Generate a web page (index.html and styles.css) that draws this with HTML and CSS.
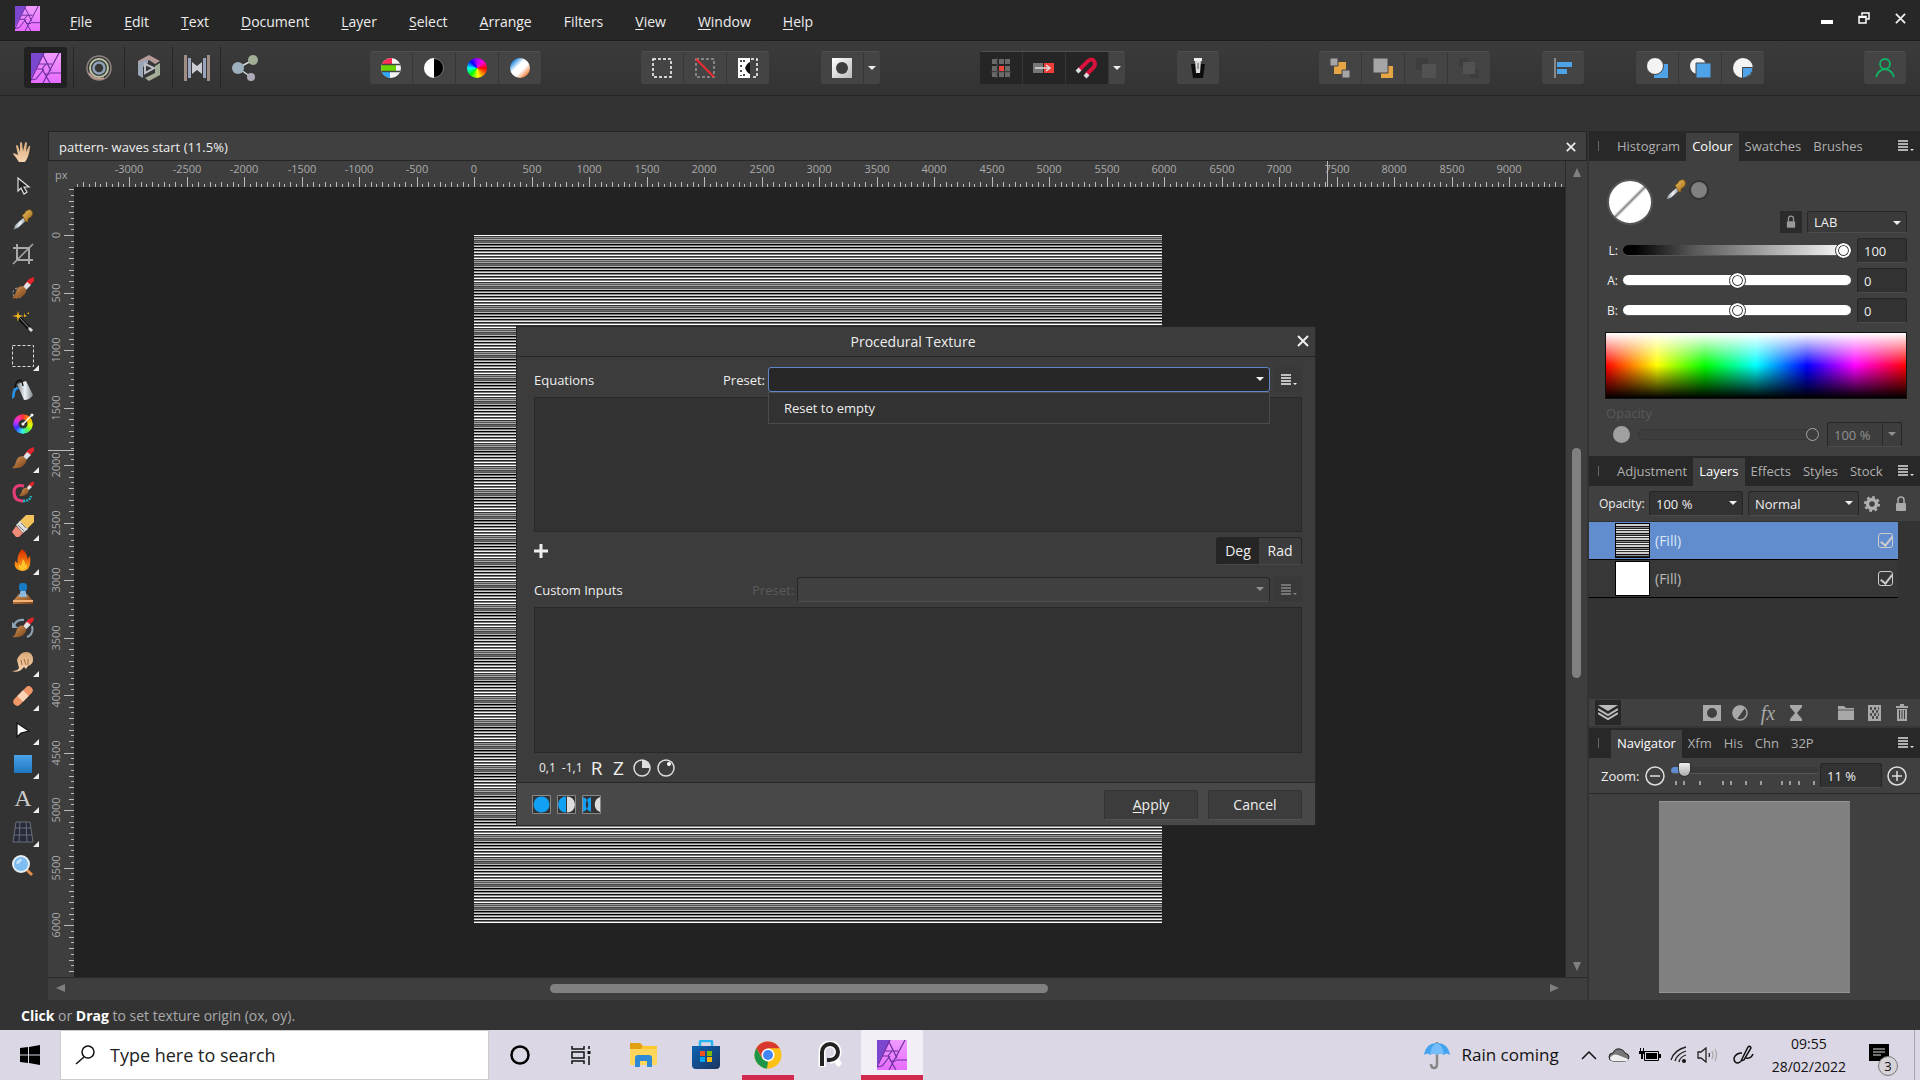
FILE: index.html
```html
<!DOCTYPE html>
<html lang="en">
<head>
  <meta charset="UTF-8">
  <title>pattern- waves start (11.5%)</title>
  <meta name="viewport" content="width=device-width, initial-scale=1.0">
  <link rel="stylesheet" href="styles.css">
</head>
<body>

  <!-- shared symbols -->
  <svg class="defs" width="0" height="0" aria-hidden="true">
    <defs>
      <linearGradient id="pink" x1="0" y1="0" x2="0" y2="1"><stop offset="0" stop-color="#f09bff"/><stop offset="1" stop-color="#e76cff"/></linearGradient>
      <linearGradient id="wood" x1="0" y1="0" x2="1" y2="1"><stop offset="0" stop-color="#d9985a"/><stop offset="1" stop-color="#7a4316"/></linearGradient>
      <linearGradient id="gold" x1="0" y1="0" x2="1" y2="1"><stop offset="0" stop-color="#f2c565"/><stop offset="1" stop-color="#9a6413"/></linearGradient>
      <linearGradient id="steel" x1="0" y1="0" x2="1" y2="0"><stop offset="0" stop-color="#7f8c96"/><stop offset=".5" stop-color="#eef3f6"/><stop offset="1" stop-color="#7b868e"/></linearGradient>
      <linearGradient id="skin" x1="0" y1="0" x2="0" y2="1"><stop offset="0" stop-color="#d9a978"/><stop offset="1" stop-color="#f7d3b0"/></linearGradient>
      <linearGradient id="flame" x1="0" y1="0" x2="0" y2="1"><stop offset="0" stop-color="#d92800"/><stop offset="1" stop-color="#ffb01c"/></linearGradient>
      <linearGradient id="blue" x1="0" y1="0" x2="0" y2="1"><stop offset="0" stop-color="#4aa3e8"/><stop offset="1" stop-color="#1f76c0"/></linearGradient>
      <linearGradient id="paper" x1="0" y1="0" x2="1" y2="1"><stop offset="0" stop-color="#fff"/><stop offset="1" stop-color="#bbb"/></linearGradient>
      <linearGradient id="bag" x1="0" y1="0" x2="1" y2="1"><stop offset="0" stop-color="#0b63b4"/><stop offset="1" stop-color="#1c355f"/></linearGradient>
      <symbol id="logo" viewBox="0 0 30 30">
        <rect width="30" height="30" fill="url(#pink)"/>
        <path d="M0 0h13L0 25z" fill="#7b47cf"/>
        <g stroke="#6b2f9e" stroke-width="1.2" fill="none">
          <path d="M13 0 0 27M12 2l8 16M28 0 12 30M8 11h13M5 16l6 0 8 14M11 16l4-5M11 16l3 5h5M19 20h11M0 27l5-1 8-10"/>
        </g>
      </symbol>
      <symbol id="picker" viewBox="0 0 22 22">
        <path d="M1 21 3 16 12 8l3 3-9 8z" fill="url(#steel)" stroke="#333" stroke-width=".6"/>
        <path d="m10 6 2-1 2-3q4-3 6 0t-1 6l-3 2v3l-2 0z" fill="url(#gold)" stroke="#5f3d08" stroke-width=".6"/>
      </symbol>
      <symbol id="brush" viewBox="0 0 22 22">
        <path d="M22 0 17 2l-5 6 3 3 7-7z" fill="#e3242b"/>
        <path d="m15 5-4 5 3 3 5-5z" fill="#dfe3e6"/>
        <path d="M11 9q-6 0-7 6-1 4-4 6 8 1 12-3 3-3 2-6z" fill="url(#wood)"/>
      </symbol>
      <symbol id="menu" viewBox="0 0 16 12">
        <path d="M0 1h10M0 4h10M0 7h10M0 10h10" stroke="currentColor" stroke-width="1.6"/>
        <path d="M12 9h4l-2 2z" fill="currentColor"/>
      </symbol>
      <symbol id="lock" viewBox="0 0 12 16">
        <path d="M3 7V4q0-3 3-3t3 3v3" fill="none" stroke="currentColor" stroke-width="1.5"/>
        <rect x="1" y="7" width="10" height="8" rx="1" fill="currentColor"/>
      </symbol>
      <symbol id="cross" viewBox="0 0 12 12">
        <path d="m1 1 10 10M11 1 1 11" stroke="currentColor" stroke-width="2" fill="none"/>
      </symbol>
    </defs>
  </svg>

  <div class="app">
    <header class="menubar">
      <svg class="menubar-logo"><use href="#logo"/></svg>
      <nav class="menus">
        <button><u>F</u>ile</button>
        <button><u>E</u>dit</button>
        <button><u>T</u>ext</button>
        <button><u>D</u>ocument</button>
        <button><u>L</u>ayer</button>
        <button><u>S</u>elect</button>
        <button><u>A</u>rrange</button>
        <button>Filters</button>
        <button><u>V</u>iew</button>
        <button><u>W</u>indow</button>
        <button><u>H</u>elp</button>
      </nav>
      <div class="window-buttons">
        <button aria-label="Minimise"><svg width="12" height="12"><path d="M0 8h12v4H0z" fill="#fff"/></svg></button>
        <button aria-label="Restore"><svg width="12" height="12" fill="none" stroke="#fff"><path d="M4 3.500V1h7v6H8.500" stroke-width="1.500"/><path d="M1 4.500h7V11H1z" stroke-width="1.500"/><path d="M1 5h7" stroke-width="2"/></svg></button>
        <button aria-label="Close"><svg width="11" height="11"><use href="#cross"/></svg></button>
      </div>
    </header>

    <div class="toolbar">
      <div class="personas">
        <button class="persona active" aria-label="Photo"><svg width="30" height="30"><use href="#logo"/></svg></button>
        <button class="persona" aria-label="Liquify">
          <svg width="26" height="26" fill="none"><circle cx="13" cy="13" r="12" stroke="#8f8480" stroke-width="1.500"/><circle cx="13" cy="13" r="9" stroke="#b9c4a4" stroke-width="2"/><circle cx="13" cy="13" r="5.500" stroke="#8fa3b8" stroke-width="2.500"/><path d="M3 18q5 8 15 5" stroke="#c39b8f" stroke-width="1.500"/></svg>
        </button>
        <button class="persona" aria-label="Develop">
          <svg width="24" height="26"><path d="M12 0 1 6v5l11-6 6 4 5-3z" fill="#b59a98"/><path d="M1 8v12l5 3V12l5-4V4z" fill="#9aa7b8"/><path d="m23 8-5 3v7l-10 5 4 3 11-6z" fill="#a3ad97"/><path d="m8 9 9 4-9 5z" fill="none" stroke="#b9bfc4" stroke-width="2"/></svg>
        </button>
        <button class="persona" aria-label="Tone Mapping">
          <svg width="26" height="26"><path d="M0 0h3v26H0zM23 0h3v26h-3z" fill="#a08d86"/><path d="M4 3h3v20H4zM19 3h3v20h-3z" fill="#9aa4bd"/><path d="m8 7 5 4 5-4v12l-5-4-5 4z" fill="#c9ccd2"/></svg>
        </button>
        <button class="persona" aria-label="Export">
          <svg width="26" height="26"><path d="M6 13 21 5M6 13l13 9" stroke="#d5d9dc" stroke-width="1.500"/><circle cx="6" cy="13" r="6" fill="#9db0bd"/><circle cx="21" cy="5" r="5" fill="#a2ae96"/><circle cx="19" cy="22" r="4" fill="#b0a8b8"/></svg>
        </button>
      </div>

      <div class="group">
        <button aria-label="Auto levels"><svg width="20" height="20"><clipPath id="c1"><circle cx="10" cy="10" r="10"/></clipPath><g clip-path="url(#c1)"><path d="M0 0h20v20H0z" fill="#f3f3f3"/><path d="M0 0h11v6H0z" fill="#ff2d55"/><path d="M0 7h15v6H0z" fill="#6ad400"/><path d="M0 14h9v6H0z" fill="#2fa8ff"/><path d="M0 6.500h20M0 13.500h20" stroke="#444" stroke-width="1.500"/></g></svg></button>
        <button aria-label="Auto contrast"><svg width="20" height="20"><circle cx="10" cy="10" r="9.500" fill="#000" stroke="#777"/><path d="M10 0a10 10 0 0 0 0 20z" fill="#fff"/></svg></button>
        <button aria-label="Auto colours"><span class="wheel"></span></button>
        <button aria-label="Auto white balance"><span class="balance"></span></button>
      </div>

      <div class="group">
        <button aria-label="Select all"><svg width="20" height="20"><rect x="1" y="1" width="18" height="18" fill="none" stroke="#fff" stroke-width="1.500" stroke-dasharray="3 2"/></svg></button>
        <button aria-label="Deselect"><svg width="20" height="20"><rect x="1" y="1" width="18" height="18" fill="none" stroke="#999" stroke-width="1.500" stroke-dasharray="3 2"/><path d="m1 1 18 18" stroke="#f22b30" stroke-width="2"/></svg></button>
        <button aria-label="Invert selection"><svg width="20" height="20"><path d="M0 0h12v20H0z" fill="#fff"/><path d="M13 1h6v18h-6" fill="none" stroke="#fff" stroke-width="1.500" stroke-dasharray="3 2"/><path d="M12 4v12q-3-1-5-6 2-5 5-6" fill="#111"/><path d="M3 2v16M5 3h5M5 17h4" stroke="#111" stroke-width="1.500" stroke-dasharray="2 3"/></svg></button>
      </div>

      <div class="group near">
        <button aria-label="Quick mask"><svg width="20" height="20"><path d="M0 0h20v20H0z" fill="url(#paper)"/><circle cx="10" cy="10" r="6" fill="#3d3d3d"/></svg></button>
        <button class="drop" aria-label="Quick mask options"><i class="caret"></i></button>
      </div>

      <div class="group">
        <button class="on" aria-label="Grid snapping"><svg width="20" height="20"><path d="M1 1h5v5H1zM8 1h5v5H8zM14 1h5v5h-5zM1 8h5v5H1zM14 8h5v5h-5zM1 14h5v5H1zM8 14h5v5H8zM14 14h5v5h-5z" fill="#6a6a6a"/><path d="M8 8h5v5H8z" fill="#f5443c"/><path d="M6 0v20M0 14h20" stroke="#555" stroke-width="1"/></svg></button>
        <button class="on" aria-label="Force pixel alignment"><svg width="22" height="12"><path d="M0 1h10v10H0z" fill="#777"/><path d="M11 1h10v10H11z" fill="#ef3e3a"/><path d="M2 6h14M13 3l4 3-4 3" fill="none" stroke="#ddd" stroke-width="1.500"/></svg></button>
        <button class="on" aria-label="Snapping"><svg width="24" height="24" fill="none"><path d="M4 14 13 5q4-3 6 0t0 6l-8 8" stroke="#d9123c" stroke-width="4"/><path d="m2 16 3-3M10 21l3-3" stroke="#ddd" stroke-width="4"/></svg></button>
        <button class="drop" aria-label="Snapping options"><i class="caret"></i></button>
      </div>

      <div class="group near">
        <button aria-label="Assistant"><svg width="18" height="20"><path d="M2 6h14l-2 14H4z" fill="#0c0c0c"/><path d="M6 2h6l-1 13H7z" fill="#ddd"/><path d="M5 0h8v3H5z" fill="#eee"/><path d="M8 5h2v6H8z" fill="#999"/></svg></button>
      </div>

      <div class="group">
        <button aria-label="Move to back"><svg width="20" height="20"><path d="M5 4h11v8H5z" fill="#e5a544"/><path d="M4 8h8v8H4z" fill="#e5a544"/><path d="M0 0h8v8H0zM12 12h8v8h-8z" fill="#a5a5a5" stroke="#444"/></svg></button>
        <button aria-label="Back one"><svg width="20" height="20"><path d="M8 8h12v12H8z" fill="#e5a544"/><path d="M0 0h15v15H0z" fill="#a5a5a5" stroke="#444"/></svg></button>
        <button disabled aria-label="Forward one"><svg width="20" height="20"><path d="M0 0h12v12H0z" fill="#3d3d3d"/><path d="M6 6h14v14H6z" fill="#525252"/></svg></button>
        <button disabled aria-label="Move to front"><svg width="20" height="20"><path d="M0 0h9v9H0zM11 11h9v9h-9z" fill="#3d3d3d"/><path d="M4 4h12v12H4z" fill="#525252"/></svg></button>
      </div>

      <div class="group near">
        <button aria-label="Alignment"><svg width="18" height="20"><path d="M1 0v20" stroke="#888" stroke-width="2"/><path d="M3 4h15v5H3zM3 11h10v5H3z" fill="#4da2e8"/></svg></button>
      </div>

      <div class="group near">
        <button aria-label="Add"><svg width="21" height="20"><path d="M7 6h14v14H7z" fill="#4da2e8"/><circle cx="8" cy="8" r="8.500" fill="#f3f3f3" stroke="#444"/></svg></button>
        <button aria-label="Subtract"><svg width="21" height="20"><circle cx="8" cy="8" r="8" fill="#f3f3f3"/><path d="M6 5h15v15H6z" fill="#4da2e8" stroke="#444"/></svg></button>
        <button aria-label="Intersect"><svg width="20" height="20"><circle cx="10" cy="10" r="10" fill="#f3f3f3"/><path d="M9.500 9.500H20q0 8-10.500 11z" fill="#4da2e8" stroke="#444"/></svg></button>
      </div>

      <button class="group account" aria-label="Account"><svg width="20" height="20" fill="none" stroke="#12b264" stroke-width="1.800"><circle cx="10" cy="6" r="5"/><path d="M1 19q2-7 9-8 7 1 9 8"/></svg></button>
    </div>

    <div class="contextbar"></div>

    <div class="workspace">
      <aside class="tools">
        <button class="tool" aria-label="View"><svg viewBox="0 0 22 22"><path d="M7 21Q3 15 1 13q0-2 5 1L4 5q1-2 2 0l2 6V2q1-2 2 0l1 8 2-8q1-2 2 0l-1 9 3-6q2-1 1 1-1 10-5 15z" fill="url(#skin)"/></svg></button>
        <button class="tool" aria-label="Move"><svg viewBox="0 0 22 22"><path d="M6 3v13l3-3 3 6 3-2-3-5h5z" fill="#222" stroke="#ddd" stroke-width="1.200"/></svg></button>
        <button class="tool" aria-label="Colour Picker"><svg><use href="#picker"/></svg></button>
        <button class="tool" aria-label="Crop"><svg viewBox="0 0 22 22" fill="none" stroke="#a8a8a8" stroke-width="2"><path d="M5 1v16h16M1 5h16v16"/><path d="M1 21 21 1" stroke-width="1.500"/></svg></button>
        <button class="tool" aria-label="Selection Brush"><svg viewBox="0 0 22 22"><circle cx="6" cy="16" r="5" fill="none" stroke="#bbb" stroke-dasharray="2 2"/><use href="#brush"/></svg></button>
        <button class="tool" aria-label="Flood Select"><svg viewBox="0 0 22 22"><path d="m7 7 12 12" stroke="#111" stroke-width="4"/><path d="m7 6 12 13" stroke="#999" stroke-width="1"/><path d="m17 17 3 3" stroke="#ddd" stroke-width="3"/><path d="m6 0 1 4 5 1-5 1-1 5-1-5-5-1 5-1zM12 2l1 2 2 1-3 1zM17 1v2h-2z" fill="#f5b71c"/></svg></button>
        <button class="tool fly" aria-label="Marquee"><svg viewBox="0 0 22 22"><rect x=".5" y=".5" width="21" height="21" fill="none" stroke="#ddd" stroke-dasharray="3 2"/></svg></button>
        <button class="tool" aria-label="Flood Fill"><svg viewBox="0 0 22 22"><path d="M0 20Q0 9 4 8l5 1q-6 1-6 6 0 4-3 5" fill="#2893e6"/><path d="m5 5 9-3 7 14q-3 5-9 5z" fill="url(#steel)"/><path d="M3 9q0-7 5-8 2 0 3 6" fill="none" stroke="#111" stroke-width="1.300"/></svg></button>
        <button class="tool" aria-label="Gradient"><span class="wheel ring"></span><svg class="over" viewBox="0 0 22 22"><path d="M11 11 20 2" stroke="#fff" stroke-width="1.500"/><circle cx="11" cy="11" r="1.500" fill="#fff"/><circle cx="20" cy="2" r="1.500" fill="#fff"/></svg></button>
        <button class="tool fly" aria-label="Paint Brush"><svg><use href="#brush"/></svg></button>
        <button class="tool" aria-label="Colour Replacement"><svg viewBox="0 0 22 22" fill="none"><path d="M12 5q-10-2-10 6 0 9 9 9" stroke="#e63f78" stroke-width="3"/><path d="M11 20q7 0 8-5" stroke="#22b7c7" stroke-width="2.500" stroke-dasharray="2 1"/><use href="#brush" x="7" y="0" width="15" height="16"/></svg></button>
        <button class="tool fly" aria-label="Erase"><svg viewBox="0 0 22 22"><path d="m14 0 8 0v7l-8 8-7-8z" fill="#f2c25c"/><path d="m8 6 8 8-5 4-7-8z" fill="#dedede"/><path d="m9 8 5 5M6 10l6 6" stroke="#777"/><path d="m4 11 7 7-4 4H4l-4-5z" fill="#f08d78"/></svg></button>
        <button class="tool fly" aria-label="Burn"><svg viewBox="0 0 22 22"><path d="M10 0q6 5 5 10l3-3q2 14-7 15Q1 21 3 12l3 2Q4 7 10 0" fill="url(#flame)"/><path d="M11 10q3 4 2 6l2-1q0 6-5 6-4-1-3-6l2 2z" fill="#ffc52e"/></svg></button>
        <button class="tool" aria-label="Clone"><svg viewBox="0 0 22 22"><path d="M7 11h8l6 7v3H1v-3z" fill="url(#wood)"/><path d="M1 18h20" stroke="#f3b277" stroke-width="2"/><path d="M9 6h4l2 8H7z" fill="#8bb9dd"/><rect x="7" y="0" width="8" height="8" rx="3" fill="#187cc4"/></svg></button>
        <button class="tool" aria-label="Undo Brush"><svg viewBox="0 0 22 22"><path d="M2 9Q4 2 12 3M20 9q2 8-5 11" fill="none" stroke="#8ea5b8" stroke-width="2"/><path d="M0 5v6h6z" fill="#8ea5b8"/><use href="#brush" width="22" height="21"/></svg></button>
        <button class="tool fly" aria-label="Smudge"><svg viewBox="0 0 22 22"><path d="M0 20q6 0 7-3l-2-8Q8 1 14 1q7 0 7 8 0 4-5 6l-2 3-2-2-3 3q-4 3-9 1" fill="url(#skin)"/><path d="m9 9 1 5M12 8l2 6M16 8l0 6" stroke="#a5703c" fill="none"/></svg></button>
        <button class="tool fly" aria-label="Healing"><svg viewBox="0 0 22 22"><rect x="-1" y="7" width="24" height="8" rx="4" fill="#f0976a" transform="rotate(-45 11 11)"/><rect x="7" y="7" width="8" height="8" fill="#fbd5b5" transform="rotate(-45 11 11)"/></svg></button>
        <button class="tool fly" aria-label="Node"><svg viewBox="0 0 22 22"><path d="M5 4v14l4-4 8-2z" fill="#fff" stroke="#111" stroke-width="1.200"/></svg></button>
        <button class="tool fly" aria-label="Rectangle"><svg viewBox="0 0 22 22"><rect x="2" y="2" width="18" height="18" fill="url(#blue)"/></svg></button>
        <button class="tool fly letter" aria-label="Artistic Text">A</button>
        <button class="tool fly" aria-label="Mesh Warp"><svg viewBox="0 0 22 22"><path d="M4 1h14l3 20H1zM3 7h16M2 14h18M8 1 7 21M14 1l1 20" fill="#262a3a" stroke="#6c6e78"/></svg></button>
        <button class="tool" aria-label="Zoom"><svg viewBox="0 0 22 22"><path d="m14 14 6 6" stroke="#e0914a" stroke-width="3"/><circle cx="9" cy="9" r="8" fill="#7dbdf2" stroke="#e8eef2" stroke-width="2"/><path d="M4 9q1-5 6-5-1 5-6 5" fill="#c5e3fb"/></svg></button>
      </aside>

      <main class="document">
        <div class="doc-tab">
          <span>pattern- waves start (11.5%)</span>
          <button aria-label="Close document"><svg width="10" height="10"><use href="#cross"/></svg></button>
        </div>
        <div class="corner">px</div>
        <svg class="ruler ruler-h" id="ruler-h"></svg>
        <svg class="ruler ruler-v" id="ruler-v"></svg>
        <div class="canvas"><div class="artboard"></div></div>
        <div class="vscroll"><i class="arrow up"></i><div class="thumb"></div><i class="arrow down"></i></div>
        <div class="hscroll"><i class="arrow left"></i><div class="thumb"></div><i class="arrow right"></i></div>
      </main>

      <aside class="panels">
        <section class="panel">
          <div class="tabs">
            <button>Histogram</button>
            <button class="active">Colour</button>
            <button>Swatches</button>
            <button>Brushes</button>
            <button class="panel-menu" aria-label="Colour panel menu"><svg width="16" height="12"><use href="#menu"/></svg></button>
          </div>
          <div class="colour">
            <div class="colour-top">
              <span class="well"></span>
              <svg class="eyedropper" width="22" height="22"><use href="#picker"/></svg>
              <span class="picked"></span>
              <button class="lock" aria-label="Lock colour model"><svg width="10" height="14"><use href="#lock"/></svg></button>
              <span class="select model"><select aria-label="Colour model"><option>LAB</option></select></span>
            </div>
            <div class="slider"><label for="l">L:</label><input class="lightness" id="l" type="range" min="0" max="100" value="100"><input class="field" type="text" value="100" aria-label="L value"></div>
            <div class="slider"><label for="a">A:</label><input id="a" type="range" min="-128" max="128" value="0"><input class="field" type="text" value="0" aria-label="A value"></div>
            <div class="slider"><label for="b">B:</label><input id="b" type="range" min="-128" max="128" value="0"><input class="field" type="text" value="0" aria-label="B value"></div>
            <div class="spectrum"></div>
            <label class="faded" for="op">Opacity</label>
            <div class="opacity">
              <span class="dot"></span>
              <input class="empty" id="op" type="range" min="0" max="100" value="100" disabled>
              <span class="select split"><select disabled aria-label="Colour opacity"><option>100 %</option></select></span>
            </div>
          </div>
        </section>

        <section class="panel layers">
          <div class="tabs">
            <button>Adjustment</button>
            <button class="active">Layers</button>
            <button>Effects</button>
            <button>Styles</button>
            <button>Stock</button>
            <button class="panel-menu" aria-label="Layers panel menu"><svg width="16" height="12"><use href="#menu"/></svg></button>
          </div>
          <div class="layer-opts">
            <label for="lop">Opacity:</label>
            <span class="select dark lop"><select id="lop"><option>100 %</option></select></span>
            <span class="select blend"><select aria-label="Blend mode"><option>Normal</option></select></span>
            <button aria-label="Blend options"><svg width="16" height="16"><circle cx="8" cy="8" r="4.500" fill="none" stroke="#b0b0b0" stroke-width="3.500"/><circle cx="8" cy="8" r="7" fill="none" stroke="#b0b0b0" stroke-width="2" stroke-dasharray="2.750 2.750"/></svg></button>
            <button aria-label="Lock layer"><svg width="12" height="16"><use href="#lock"/></svg></button>
          </div>
          <div class="layer-list">
            <div class="layer selected"><span class="thumbnail lines"></span><label for="v1">(Fill)</label><input id="v1" type="checkbox" checked></div>
            <div class="layer"><span class="thumbnail"></span><label for="v2">(Fill)</label><input id="v2" type="checkbox" checked></div>
          </div>
          <div class="layer-bar">
            <button class="stack" aria-label="Edit all layers"><svg width="20" height="16"><path d="M0 0h20l-10 6z" fill="#bbb"/><path d="m0 4 10 6 10-6M0 8l10 6 10-6" fill="none" stroke="#bbb" stroke-width="2"/></svg></button>
            <button aria-label="Mask"><svg width="18" height="16"><path d="M0 0h18v16H0z" fill="#a8a8a8"/><circle cx="9" cy="8" r="5" fill="#404040"/></svg></button>
            <button aria-label="Adjustments"><svg width="16" height="16"><circle cx="8" cy="8" r="7" fill="#404040" stroke="#a8a8a8" stroke-width="1.500"/><path d="M13 3A7 7 0 1 0 5 14z" fill="#a8a8a8"/></svg></button>
            <button class="fx" aria-label="Layer effects">fx</button>
            <button aria-label="Live filters"><svg width="12" height="16"><path d="M0 0h12v2L7 8l5 6v2H0v-2l5-6-5-6z" fill="#a8a8a8"/></svg></button>
            <button class="gap" aria-label="Group"><svg width="16" height="14"><path d="M0 0h6l2 2h8v12H0z" fill="#a8a8a8"/><path d="M0 4h16" stroke="#555"/></svg></button>
            <button aria-label="Add pixel layer"><svg width="13" height="16"><path d="M0 0h13v16H0z" fill="#a8a8a8"/><path d="M2 3.500h9M4 6.500h7M2 9.500h9M4 12.500h7" stroke="#404040" stroke-width="2.500" stroke-dasharray="2 2"/></svg></button>
            <button aria-label="Delete layer"><svg width="12" height="17"><path d="M0 2h12v2H0zM4 0h4v2H4zM1 5h10v12H1z" fill="#a8a8a8"/><path d="M3.500 6v9M6 6v9M8.500 6v9" stroke="#404040"/></svg></button>
          </div>
        </section>

        <section class="panel">
          <div class="tabs">
            <button class="active">Navigator</button>
            <button>Xfm</button>
            <button>His</button>
            <button>Chn</button>
            <button>32P</button>
            <button class="panel-menu" aria-label="Navigator panel menu"><svg width="16" height="12"><use href="#menu"/></svg></button>
          </div>
          <div class="zoom">
            <label for="zoom">Zoom:</label>
            <button aria-label="Zoom out"><svg width="20" height="20" fill="none" stroke="#ddd" stroke-width="1.500"><circle cx="10" cy="10" r="9"/><path d="M5 10h10"/></svg></button>
            <div class="zoom-slider">
              <input id="zoom" type="range" min="0" max="100" value="6">
              <svg width="148" height="4"><path d="M5 0v4M13 0v4M29 0v4M52 0v4M60 0v4M75 0v4M90 0v4M111 0v4M119 0v4M128 0v4M143 0v4" stroke="#bbb" stroke-width="1.500"/></svg>
            </div>
            <input class="field" type="text" value="11 %" aria-label="Zoom level">
            <button aria-label="Zoom in"><svg width="20" height="20" fill="none" stroke="#ddd" stroke-width="1.500"><circle cx="10" cy="10" r="9"/><path d="M5 10h10M10 5v10"/></svg></button>
          </div>
          <div class="preview"><div></div></div>
        </section>
      </aside>
    </div>

    <footer class="status"><b>Click</b> or <b>Drag</b> to set texture origin (ox, oy).</footer>

    <div class="taskbar">
      <button class="start" aria-label="Start"><svg width="20" height="20"><path d="M0 3l8-1v7.500H0zM9 2l11-2v9.500H9zM0 10.500h8V18l-8-1zM9 10.500h11V20L9 18z"/></svg></button>
      <label class="search"><svg width="20" height="20" fill="none" stroke="#111" stroke-width="1.500"><circle cx="13" cy="7" r="6"/><path d="m9 12-8 7"/></svg><input type="text" placeholder="Type here to search"></label>
      <button class="app-icon" aria-label="Cortana"><svg width="20" height="20"><circle cx="10" cy="10" r="8.500" fill="none" stroke="#000" stroke-width="2.500"/></svg></button>
      <button class="app-icon" aria-label="Task view"><svg width="22" height="20" fill="none" stroke="#111" stroke-width="1.500"><path d="M1 1v3h12V1M1 7h12v6H1zM1 19v-3h12v3M18 1v3M18 11v9"/><path d="M16.500 6h3v3h-3z" fill="#111" stroke="none"/></svg></button>
      <button class="app-icon" aria-label="File Explorer"><svg width="28" height="24"><path d="M0 0h10l3 3h14v19H0z" fill="#ffc92e"/><path d="M0 0h10l3 3-2 3H0z" fill="#e0a010"/><path d="M0 6h27v16H0z" fill="#ffd65c"/><path d="M5 24v-9q0-3 3-3h11q3 0 3 3v9h-5v-6h-7v6z" fill="#2f8ad6"/></svg></button>
      <button class="app-icon" aria-label="Microsoft Store"><svg width="30" height="30"><path d="M9 7V2q0-1 1-1h10q1 0 1 1v5" fill="none" stroke="#29b6f0" stroke-width="2.500"/><path d="M1 6h28v19q0 4-4 4H5q-4 0-4-4z" fill="url(#bag)"/><path d="M9 11h5v5H9z" fill="#f25022"/><path d="M16 11h5v5h-5z" fill="#7fba00"/><path d="M9 17h5v5H9z" fill="#00a4ef"/><path d="M16 17h5v5h-5z" fill="#ffb900"/></svg></button>
      <button class="app-icon running" aria-label="Chrome"><svg width="28" height="28" viewBox="0 0 28 28"><circle cx="14" cy="14" r="13.500" fill="#fbc116"/><path d="M2.300 7.200A13.500 13.500 0 0 1 25.700 7.200H14L8.500 17.500z" fill="#d93a30"/><path d="M2.300 7.200 8.200 17.500 14 20.500 13 27.500A13.500 13.500 0 0 1 2.300 7.200" fill="#1e9649"/><circle cx="14" cy="14" r="6.500" fill="#fff"/><circle cx="14" cy="14" r="5" fill="#4285f4"/></svg></button>
      <button class="app-icon" aria-label="P"><svg width="26" height="28" fill="none"><path d="M5 26V11a8 8 0 1 1 8 8" stroke="#fff" stroke-width="7"/><path d="M5 25V11a8 8 0 1 1 8 8h-3" stroke="#222" stroke-width="4"/><path d="m19 20 3-2 3 4-3 4-4-3z" fill="#fff"/></svg></button>
      <button class="app-icon running current" aria-label="Photo editor"><svg width="30" height="30"><use href="#logo"/></svg></button>

      <div class="tray">
        <button class="weather"><svg width="28" height="30"><path d="M14 2v22q0 4-3 4t-3-4" fill="none" stroke="#888" stroke-width="2.500"/><path d="M1 15Q3 3 14 3t13 12q-4-3-6 0-4-3-7 0-3-3-7 0-2-3-6 0" fill="#44a2ee"/><path d="M7 15Q8 5 14 3q6 2 7 12-4-3-7 0-3-3-7 0" fill="#74bdf8"/></svg>Rain coming</button>
        <button class="chevron" aria-label="Show hidden icons"><svg width="16" height="10" fill="none" stroke="#111" stroke-width="1.500"><path d="m1 9 7-7 7 7"/></svg></button>
        <button aria-label="OneDrive"><svg width="22" height="16"><path d="M5 14q-4 0-4-4t4-4Q7 1 12 2q4 1 5 4 4 1 4 4t-4 4z" fill="#777" stroke="#222"/><path d="M5 14q-3 0-3-3 3-5 8-3l10 4q0 2-3 2z" fill="#eee"/></svg></button>
        <button aria-label="Battery"><svg width="22" height="16"><path d="M5.500 4.500h14v9h-14z" fill="none" stroke="#000"/><path d="M7 6h11v6H7zM20 7h2v4h-2zM1 1h1v3H1zM4 1h1v3H4zM0 4h6v3H4v5H2V7H0z"/></svg></button>
        <button aria-label="Network"><svg width="18" height="18" fill="none" stroke="#222" stroke-width="1.300"><path d="M1 14Q4 4 16 1M5 15Q7 8 16 5M9 16q1-5 7-7"/><circle cx="14" cy="15" r="2" fill="#111" stroke="none"/></svg></button>
        <button aria-label="Volume"><svg width="22" height="16" fill="none" stroke="#222" stroke-width="1.300"><path d="M1 5h3l5-4v14l-5-4H1z"/><path d="M12 6q1 2 0 4"/><path d="M15 4q2 4 0 8M18 2q3 6 0 12" stroke="#aaa"/></svg></button>
        <button class="pen" aria-label="Pen"><svg width="22" height="20" fill="none" stroke="#111" stroke-width="1.500"><path d="M8 16 15 2q2-2 3 1L11 15zM9 8q-6 0-8 5 0 5 4 5 3-1 4-3M13 13q5 1 7-4"/></svg></button>
        <div class="clock"><span>09:55</span><span>28/02/2022</span></div>
        <button class="notes" aria-label="Notifications"><svg width="20" height="22"><path d="M0 0h20v17h-4v4l-5-4H0z"/><path d="M4 5h12M4 8h12M4 11h8" stroke="#ddd"/></svg><span>3</span></button>
      </div>
    </div>
  </div>

  <div class="dialog" role="dialog" aria-labelledby="dlg-title">
    <div class="dialog-title">
      <span id="dlg-title">Procedural Texture</span>
      <button aria-label="Close dialog"><svg width="12" height="12"><use href="#cross"/></svg></button>
    </div>
    <div class="dialog-body">
      <div class="dialog-row">
        <span>Equations</span>
        <label for="preset1">Preset:</label>
        <span class="select wide open">
          <select id="preset1"><option></option></select>
          <span class="options" role="listbox"><span role="option">Reset to empty</span></span>
        </span>
        <button class="list-menu" aria-label="Preset menu"><svg width="16" height="12"><use href="#menu"/></svg></button>
      </div>
      <div class="list equations"></div>
      <div class="dialog-row units">
        <button class="plus" aria-label="Add equation"><svg width="14" height="14"><path d="M7 0v14M0 7h14" stroke="#eee" stroke-width="3"/></svg></button>
        <span class="toggle"><button class="on">Deg</button><button>Rad</button></span>
      </div>
      <div class="dialog-row">
        <span>Custom Inputs</span>
        <label class="off" for="preset2">Preset:</label>
        <span class="select narrow"><select id="preset2" disabled><option></option></select></span>
        <button class="list-menu off" disabled aria-label="Input preset menu"><svg width="16" height="12"><use href="#menu"/></svg></button>
      </div>
      <div class="list inputs"></div>
      <div class="input-types">
        <button class="small">0,1</button>
        <button class="small">-1,1</button>
        <button class="big">R</button>
        <button class="big">Z</button>
        <button aria-label="Angle"><svg width="18" height="18"><circle cx="9" cy="9" r="8" fill="none" stroke="#ddd" stroke-width="1.500"/><path d="M9 9V1a8 8 0 0 1 8 8z" fill="#ddd"/></svg></button>
        <button aria-label="Point"><svg width="18" height="18"><circle cx="9" cy="9" r="8" fill="none" stroke="#ddd" stroke-width="1.500"/><circle cx="12" cy="5" r="2" fill="#fff"/></svg></button>
      </div>
    </div>
    <div class="dialog-foot">
      <button class="view" aria-label="No split"><svg width="19" height="19"><path d="M.5.500h18v18H.5z" fill="#333" stroke="#888"/><circle cx="9.500" cy="9.500" r="8" fill="#12a0f5"/></svg></button>
      <button class="view" aria-label="Split"><svg width="19" height="19"><path d="M.5.500h18v18H.5z" fill="#333" stroke="#888"/><path d="M9 1.500a8 8 0 0 0 0 16z" fill="#12a0f5"/><path d="M10 1.500a8 8 0 0 1 0 16z" fill="#ddd"/></svg></button>
      <button class="view" aria-label="Mirror"><svg width="19" height="19"><path d="M.5.500h18v18H.5z" fill="#333" stroke="#888"/><path d="M1 2a8 8 0 0 1 0 15zM9 2a8 8 0 0 0 0 15z" fill="#12a0f5"/><path d="M18 2a8 8 0 0 0 0 15z" fill="#ddd"/></svg></button>
      <button class="action"><u>A</u>pply</button>
      <button class="action">Cancel</button>
    </div>
  </div>

  <script>
    // one step is 50 document units at 11.5% zoom
    const STEP = 5.75;

    function drawRuler(id, origin, cursor, vertical) {
      const svg = document.getElementById(id);
      const length = vertical ? svg.clientHeight : svg.clientWidth;
      let out = "";
      for (let n = -Math.floor(origin / STEP); origin + n * STEP < length; n++) {
        const pos = Math.round(origin + n * STEP);
        const size = n % 10 === 0 ? 10 : n % 2 === 0 ? 5 : 3;
        if (vertical) {
          out += `<rect x="${26 - size}" y="${pos}" width="${size}" height="1"/>`;
        } else {
          out += `<rect x="${pos}" y="${26 - size}" width="1" height="${size}"/>`;
        }
        if (n % 10 === 0 && n > -70) {
          out += vertical
            ? `<text transform="translate(12 ${pos}) rotate(-90)">${n * 50}</text>`
            : `<text x="${pos}" y="12">${n * 50}</text>`;
        }
      }
      out += vertical
        ? `<rect x="0" y="${cursor}" width="26" height="1"/>`
        : `<rect x="${cursor}" y="0" width="1" height="26"/>`;
      svg.innerHTML = out;
    }

    drawRuler("ruler-h", 400, 1253, false);
    drawRuler("ruler-v", 48, 263, true);
  </script>
</body>
</html>
```
FILE: styles.css
```css
* {
  box-sizing: border-box;
}

body {
  margin: 0;
  background: #333;
  color: #eee;
  font-family: "Open Sans", "Noto Sans", sans-serif;
  font-size: 13px;
  line-height: 18px;
  overflow: hidden;
}

button {
  background: none;
  border: 0;
  padding: 0;
  margin: 0;
  color: inherit;
  font: inherit;
  display: flex;
  align-items: center;
  justify-content: center;
}

input, select {
  font: inherit;
  color: inherit;
  margin: 0;
}

svg {
  display: block;
  flex: none;
}

u {
  text-underline-offset: 2px;
}

.defs {
  position: absolute;
}

.app {
  height: 100vh;
  display: flex;
  flex-direction: column;
}

/* menu bar */
.menubar {
  height: 41px;
  flex: none;
  background: #272727;
  border-bottom: 1px solid #1d1d1d;
  display: flex;
  align-items: center;
  padding: 0 14px 0 15px;
}

.menubar-logo {
  width: 25px;
  height: 25px;
  margin-right: 14px;
  margin-bottom: 3px;
}

.menus {
  display: flex;
  font-size: 14px;
  padding-top: 4px;
}

.menus button {
  display: block;
  padding: 0 16px;
}

.window-buttons {
  margin-left: auto;
  display: flex;
  gap: 25px;
  padding-bottom: 4px;
}

/* toolbar */
.toolbar {
  height: 55px;
  flex: none;
  background: linear-gradient(#3b3b3b, #333);
  border-bottom: 1px solid #222;
  display: flex;
  align-items: center;
  padding: 0 14px 1px 24px;
}

.personas {
  display: flex;
  align-items: center;
  width: 246px;
}

.persona {
  width: 48px;
  height: 41px;
  border-left: 1px solid #262626;
}

.persona.active {
  width: 43px;
  margin-right: 6px;
  background: #212121;
  border: 0;
  border-radius: 3px;
}

.persona:nth-child(2) {
  width: 51px;
}

.group {
  display: flex;
  margin-left: 100px;
  height: 33px;
  background: #444;
  border-top: 1px solid #505050;
  border-radius: 3px;
}

.group.near {
  margin-left: 52px;
}

.group button {
  width: 43px;
  border-right: 1px solid #373737;
}

.group button:last-child {
  border-right: 0;
  width: 42px;
}

.group button.on {
  background: #252525;
}

.group button.drop {
  width: 16px;
}

.group.account {
  width: 42px;
  margin-left: auto;
  align-items: center;
}

.caret {
  border: 4px solid transparent;
  border-top-color: #eee;
  border-bottom: 0;
}

.wheel, .balance {
  width: 20px;
  height: 20px;
  border-radius: 50%;
  background: conic-gradient(#a0f, #f0c 14%, #f00 25%, #ff0 48%, #0f0 62%, #0ff 75%, #00f 88%, #a0f);
}

.wheel.ring {
  background: conic-gradient(#f33, #fa0 14%, #df0 28%, #5e5 40%, #3ee 52%, #33f 66%, #b3f 78%, #f3a 90%, #f33);
  mask: radial-gradient(circle, transparent 4px, #000 5px);
}

.balance {
  background: linear-gradient(135deg, #1d87e0 15%, #fff 40%, #fff 60%, #ee6a1c 90%);
}

.contextbar {
  height: 35px;
  flex: none;
}

/* workspace */
.workspace {
  flex: 1;
  min-height: 0;
  display: grid;
  grid-template-columns: 48px 1fr 333px;
}

.tools {
  padding-top: 4px;
}

.tool {
  position: relative;
  width: 46px;
  height: 34px;
}

.tool svg {
  width: 22px;
  height: 22px;
}

.tool .over {
  position: absolute;
  top: 6px;
  left: 12px;
}

.tool.fly::after {
  content: "";
  position: absolute;
  right: 7px;
  bottom: 2px;
  border-left: 6px solid transparent;
  border-bottom: 6px solid #eee;
}

.tool.letter {
  font: 24px "Liberation Serif", serif;
  color: #ccc;
}

.document {
  display: grid;
  grid-template-columns: 26px 1fr 22px;
  grid-template-rows: 30px 26px 1fr 23px;
  background: #3e3e3e;
  min-width: 0;
  min-height: 0;
}

.doc-tab {
  grid-column: 1 / -1;
  display: flex;
  align-items: center;
  justify-content: space-between;
  padding: 1px 10px 0 10px;
  background: #404040;
  border: 1px solid #242424;
}

.corner {
  color: #aaa;
  font-size: 11px;
  padding: 5px 0 0 7px;
}

.ruler {
  width: 100%;
  height: 100%;
  min-height: 0;
  overflow: hidden;
  fill: #bbb;
}

.ruler text {
  font-size: 11px;
  text-anchor: middle;
  fill: #aaa;
}

.ruler-h {
  grid-area: 2 / 2;
}

.ruler-v {
  grid-area: 3 / 1;
}

.canvas {
  grid-area: 3 / 2;
  position: relative;
  overflow: hidden;
  background: #222;
}

.artboard {
  position: absolute;
  left: 400px;
  top: 48px;
  width: 688px;
  height: 688px;
  background: repeating-linear-gradient(
    #fff 0 1px, #333 1px 2px, #999 2px 3px, #555 3px 4px,
    #aaa 4px 5px, #444 5px 6px, #666 6px 7px, #555 7px 8px,
    #bbb 8px 9px, #000 9px 10px, #777 10px 11px, #ccc 11px 12px,
    #000 12px 13px, #888 13px 14px, #ddd 14px 15px, #111 15px 16px,
    #888 16px 17px, #eee 17px 18px, #222 18px 19px, #777 19px 20px,
    #fff 20px 21px, #333 21px 22px, #777 22px 23px);
}

.vscroll {
  grid-area: 2 / 3 / 4 / 4;
  border-left: 1px solid #2a2a2a;
  display: flex;
  flex-direction: column;
  align-items: center;
  padding: 7px 0 6px;
}

.vscroll .thumb {
  width: 9px;
  height: 230px;
  margin-top: 271px;
  margin-bottom: auto;
}

.hscroll {
  grid-area: 4 / 1 / 5 / 4;
  border-top: 1px solid #2a2a2a;
  display: flex;
  align-items: center;
  padding: 0 28px 2px 8px;
}

.hscroll .thumb {
  width: 498px;
  height: 9px;
  margin-left: 485px;
  margin-right: auto;
}

.thumb {
  background: #808080;
  border-radius: 5px;
}

.arrow {
  border: 4px solid transparent;
}

.arrow.up {
  border-top: 0;
  border-bottom: 9px solid #808080;
}

.arrow.down {
  border-bottom: 0;
  border-top: 9px solid #808080;
}

.arrow.left {
  border-left: 0;
  border-right: 9px solid #808080;
}

.arrow.right {
  border-right: 0;
  border-left: 9px solid #808080;
}

/* form controls */
.field, .select select {
  height: 25px;
  width: 100%;
  padding: 0 6px;
  background: #323232;
  border: 1px solid #262626;
  border-bottom-color: #4c4c4c;
  border-radius: 3px;
  appearance: none;
  outline: 0;
  opacity: 1;
}

.select {
  position: relative;
  display: flex;
}

.select select {
  background: #3a3a3a;
}

.select.dark select {
  background: #323232;
}

.select::after {
  content: "";
  position: absolute;
  right: 6px;
  top: 10px;
  border: 4px solid transparent;
  border-top-color: #eee;
  border-bottom: 0;
}

.select:has(:disabled)::after {
  border-top-color: #909090;
}

input[type="range"] {
  appearance: none;
  height: 11px;
  border-radius: 6px;
  background: #fff;
  border-bottom: 1px solid #555;
}

input[type="range"]::-webkit-slider-thumb {
  appearance: none;
  width: 15px;
  height: 15px;
  border-radius: 50%;
  background: #fff;
  border: 2px solid #fff;
  outline: 1px solid #333;
  box-shadow: inset 0 0 0 1px #333;
}

/* panels */
.panels {
  display: flex;
  flex-direction: column;
  border-left: 2px solid #333;
  min-height: 0;
}

.panel {
  background: #404040;
}

.tabs {
  height: 30px;
  display: flex;
  align-items: flex-end;
  padding: 0 6px 0 22px;
  background: #282828 linear-gradient(#666, #666) 9px 10px / 1px 10px no-repeat;
}

.tabs button {
  height: 28px;
  padding: 0 6px 3px;
  color: #b0b0b0;
}

.tabs .active {
  background: #404040;
  color: #fff;
}

.tabs .panel-menu {
  margin-left: auto;
  padding: 0 0 2px;
  color: #ddd;
}

.colour {
  padding: 18px 13px 9px 16px;
}

.colour-top {
  display: flex;
  align-items: flex-start;
  height: 54px;
}

.well {
  width: 46px;
  height: 46px;
  margin-left: 2px;
  border-radius: 50%;
  border: 2px solid #555;
  background: linear-gradient(135deg, #fff 46%, #888 50%, #fff 54%);
}

.eyedropper {
  margin-left: 12px;
}

.picked {
  width: 20px;
  height: 20px;
  margin: 1px 0 0 2px;
  border-radius: 50%;
  background: #808080;
  border: 2px solid #333;
}

.lock {
  width: 22px;
  height: 22px;
  margin: 32px 5px 0 auto;
  background: #2b2b2b;
  color: #999;
}

.model {
  width: 100px;
  margin-top: 32px;
}

.model select {
  height: 22px;
}

.slider {
  display: flex;
  align-items: center;
  margin-top: 5px;
}

.slider label {
  width: 18px;
  padding-right: 5px;
  font-size: 12px;
  text-align: right;
}

.slider input[type="range"] {
  flex: 1;
  min-width: 0;
}

.slider .field {
  width: 50px;
  margin-left: 6px;
}

.slider .lightness {
  background: linear-gradient(90deg, #000 5%, #555 30%, #fff);
}

.spectrum {
  height: 67px;
  margin-top: 9px;
  border: 1px solid #111;
  background:
    linear-gradient(#fff, transparent 50%, #000),
    linear-gradient(90deg, #f00, #ff0 17%, #0f0 33%, #0ff 50%, #00f 67%, #f0f 83%, #f00);
}

.faded {
  display: block;
  margin: 5px 0 0 1px;
  color: #595959;
}

.opacity {
  display: flex;
  align-items: center;
  padding-left: 8px;
}

.dot {
  width: 17px;
  height: 17px;
  border-radius: 50%;
  background: #a0a0a0;
}

.opacity .empty {
  width: 182px;
  margin: 0 7px 0 8px;
  background: #3d3d3d;
  border: 1px solid #363636;
}

.opacity .empty::-webkit-slider-thumb {
  width: 13px;
  height: 13px;
  background: #3d3d3d;
  border: 1px solid #aaa;
  box-shadow: none;
  outline: 0;
}

.split {
  width: 75px;
  color: #909090;
}

.split select {
  background: linear-gradient(#2b2b2b, #2b2b2b) 54px 0 / 1px 100% no-repeat #3d3d3d;
}

.layers {
  flex: 1;
  display: flex;
  flex-direction: column;
  min-height: 0;
}

.layer-opts {
  height: 36px;
  display: flex;
  align-items: center;
  gap: 5px;
  padding: 0 13px 0 10px;
  border-bottom: 1px solid #333;
  color: #eee;
}

.layer-opts label {
  width: 45px;
  font-size: 12px;
}

.layer-opts button {
  color: #aaa;
}

.layer-opts button:last-child {
  margin-left: auto;
}

.lop {
  width: 94px;
}

.blend {
  width: 111px;
}

.layer-list {
  flex: 1;
  background: #333;
  padding-right: 22px;
}

.layer {
  height: 38px;
  display: flex;
  align-items: center;
  padding: 0 5px 0 26px;
  background: #373737;
  border-bottom: 1px solid #000;
  color: #bbb;
  font-size: 14px;
}

.layer.selected {
  background: #618dcf;
  color: #dde6f5;
}

.thumbnail {
  width: 35px;
  height: 35px;
  background: #fff;
  border: 1px solid #000;
}

.thumbnail.lines {
  background: repeating-linear-gradient(#ccc 0 2px, #111 2px 3px, #888 3px 4px, #222 4px 5px, #eee 5px 6px, #333 6px 7px);
}

.layer label {
  margin-left: 5px;
}

.layer input {
  appearance: none;
  width: 15px;
  height: 15px;
  margin-left: auto;
  border: 1px solid #ccc;
  border-radius: 3px;
}

.layer input::before {
  content: "";
  display: block;
  width: 5px;
  height: 10px;
  margin: 0 4px;
  border: solid #ccc;
  border-width: 0 2px 2px 0;
  transform: rotate(38deg);
}

.layer-bar {
  height: 29px;
  display: flex;
  align-items: center;
  padding: 0 4px 0 6px;
  border-bottom: 2px solid #363636;
}

.layer-bar button {
  width: 28px;
}

.layer-bar .stack {
  width: 26px;
  height: 25px;
  margin-right: auto;
  background: #282828;
}

.layer-bar .gap {
  margin-left: 22px;
}

.fx {
  font: italic 20px/16px "Liberation Serif", serif;
  color: #a8a8a8;
}

.zoom {
  height: 36px;
  display: flex;
  align-items: center;
  padding: 0 13px 0 12px;
  border-bottom: 1px solid #282828;
}

.zoom label {
  width: 44px;
}

.zoom-slider {
  width: 148px;
  margin: 0 1px 0 6px;
}

.zoom-slider input {
  display: block;
  width: 100%;
  height: 7px;
  margin-bottom: 7px;
  background: linear-gradient(90deg, #5f8dd3 10px, #3a3a3a 10px);
}

.zoom-slider input::-webkit-slider-thumb {
  width: 11px;
  height: 13px;
  border: 0;
  border-radius: 1px 1px 6px 6px;
  background: linear-gradient(#eee, #aaa);
  box-shadow: none;
}

.zoom .field {
  width: 62px;
  margin-right: 5px;
}

.preview {
  height: 206px;
  padding: 7px 0 0 70px;
}

.preview div {
  width: 191px;
  height: 192px;
  background: #808080;
  border: solid #949494;
  border-width: 1px 0;
}

/* status and taskbar */
.status {
  height: 30px;
  flex: none;
  padding: 7px 21px;
  font-size: 14px;
  color: #aaa;
}

.status b {
  color: #fff;
}

.taskbar {
  height: 50px;
  flex: none;
  display: flex;
  background: #dbd7e5;
  color: #111;
}

.start {
  width: 60px;
}

.search {
  width: 429px;
  display: flex;
  align-items: center;
  padding-left: 14px;
  background: #fff;
  border: 1px solid #ccc;
}

.search input {
  flex: 1;
  margin-left: 15px;
  padding: 0;
  border: 0;
  outline: 0;
  font-size: 18px;
}

.search input::placeholder {
  color: #222;
}

.app-icon {
  width: 62px;
  border: solid transparent;
  border-width: 5px 0;
}

.app-icon.running {
  border-bottom-color: #d02a4c;
}

.app-icon.running:not(.current) {
  width: 52px;
  margin: 0 5px;
}

.app-icon.current {
  background: #f1eff5;
  border-top-color: #f1eff5;
}

.tray {
  margin-left: auto;
  display: flex;
  align-items: center;
  gap: 9px;
  padding-right: 25px;
  border-right: 1px solid #a9a6b2;
  margin-right: 5px;
}

.weather {
  gap: 11px;
  font-size: 17px;
  margin-right: 13px;
}

.chevron {
  margin-right: 2px;
}

.pen {
  margin-left: 5px;
}

.clock {
  display: flex;
  flex-direction: column;
  align-items: center;
  font-size: 14px;
  line-height: 23px;
  margin: 0 14px 0 8px;
}

.notes {
  position: relative;
}

.notes span {
  position: absolute;
  left: 9px;
  top: 12px;
  width: 20px;
  height: 20px;
  border-radius: 50%;
  border: 1px solid #777;
  background: #d5d3d8;
}

/* dialog */
.dialog {
  position: absolute;
  left: 516px;
  top: 326px;
  width: 800px;
  background: #3c3c3c;
  border: 1px solid #262626;
}

.dialog-title {
  height: 30px;
  display: flex;
  align-items: center;
  justify-content: center;
  position: relative;
  font-size: 14px;
  padding-right: 6px;
  border-bottom: 1px solid #262626;
}

.dialog-title button {
  position: absolute;
  right: 6px;
  top: 8px;
}

.dialog-body {
  padding: 10px 13px 0 17px;
}

.dialog-row {
  height: 25px;
  display: flex;
  align-items: center;
}

.dialog-row label {
  margin: 0 3px 0 auto;
}

.off {
  color: #5a5a5a;
}

.list-menu {
  width: 27px;
  height: 25px;
  margin-left: 5px;
  background: #393939;
}

.list-menu.off {
  color: #888;
}

.wide {
  width: 502px;
}

.narrow {
  width: 473px;
}

.dialog .select select {
  background: #404040;
}

.dialog .select.open select {
  background: #272727;
  border-color: #5f87c9;
}

.options {
  position: absolute;
  top: 25px;
  left: 0;
  right: 0;
  padding: 6px 15px;
  background: #323232;
  border: 1px solid #4b4b4b;
}

.list {
  margin-top: 5px;
  background: #323232;
  border: 1px solid #282828;
}

.equations {
  height: 135px;
}

.inputs {
  height: 146px;
}

.units {
  height: 28px;
  margin: 5px 0 12px;
  justify-content: space-between;
}

.toggle {
  display: flex;
  height: 28px;
  border: 1px solid #262626;
  border-bottom-color: #484848;
  border-radius: 3px;
  font-size: 14px;
}

.toggle button {
  width: 42px;
}

.toggle .on {
  background: #252525;
}

.input-types {
  height: 29px;
  display: flex;
  align-items: center;
  gap: 6px;
  padding-left: 5px;
  font-size: 19px;
}

.input-types .small {
  font-size: 12px;
}

.input-types .big {
  width: 16px;
}

.dialog-foot {
  height: 43px;
  display: flex;
  align-items: center;
  gap: 6px;
  padding: 1px 13px 0 15px;
  background: #484848;
  border-top: 1px solid #262626;
}

.action {
  width: 94px;
  height: 30px;
  margin-left: 4px;
  background: #3c3c3c;
  border: 1px solid #333;
  border-bottom-color: #555;
  border-radius: 3px;
  font-size: 14px;
}

.view + .action {
  margin-left: auto;
}
```
